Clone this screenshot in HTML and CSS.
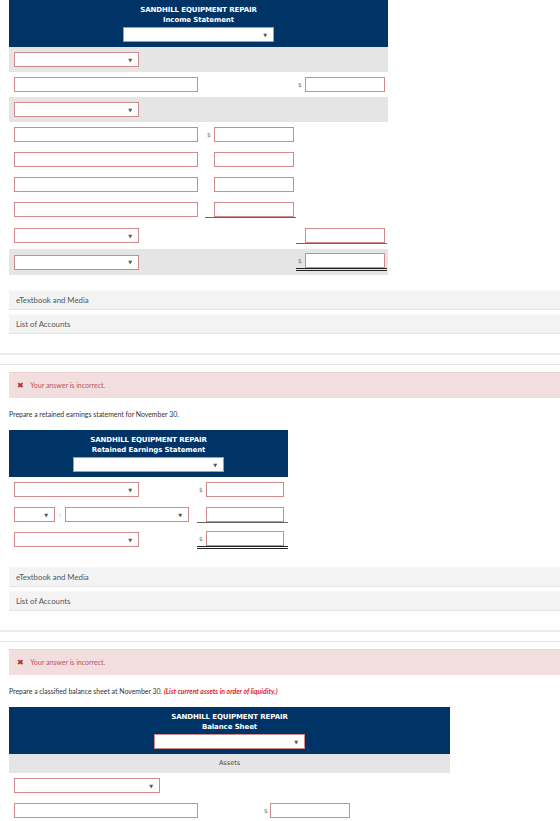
FILE: index.html
```html
<!DOCTYPE html>
<html lang="en">
<head>
  <meta charset="UTF-8" />
  <title>Sandhill Equipment Repair ‒ Financial Statements</title>
  <link rel="stylesheet" href="styles.css">
</head>

<body>
  <!-- INCOME STATEMENT -->
  <section class="sheet sheet-income">
    <header class="sheet-head">
      <div class="sheet-title">SANDHILL EQUIPMENT REPAIR</div>
      <div class="sheet-title">Income Statement</div>
      <div class="select select-date"><span class="caret">&#9660;</span></div>
    </header>

    <div class="line shade">
      <div class="select select-label"><span class="caret">&#9660;</span></div>
    </div>
    <div class="line">
      <div class="field field-label"></div>
      <div></div>
      <div class="amt"><span class="cur">$</span><div class="field field-amt"></div></div>
    </div>
    <div class="line shade">
      <div class="select select-label"><span class="caret">&#9660;</span></div>
    </div>
    <div class="line">
      <div class="field field-label"></div>
      <div class="amt"><span class="cur">$</span><div class="field field-amt"></div></div>
    </div>
    <div class="line">
      <div class="field field-label"></div>
      <div class="amt"><span class="cur"></span><div class="field field-amt"></div></div>
    </div>
    <div class="line">
      <div class="field field-label"></div>
      <div class="amt"><span class="cur"></span><div class="field field-amt"></div></div>
    </div>
    <div class="line">
      <div class="field field-label"></div>
      <div class="amt sum"><span class="cur"></span><div class="field field-amt"></div></div>
    </div>
    <div class="line line-tall">
      <div class="select select-label"><span class="caret">&#9660;</span></div>
      <div></div>
      <div class="amt sum"><span class="cur"></span><div class="field field-amt"></div></div>
    </div>
    <div class="line line-last shade">
      <div class="select select-label"><span class="caret">&#9660;</span></div>
      <div></div>
      <div class="amt total"><span class="cur">$</span><div class="field field-amt"></div></div>
    </div>
  </section>

  <div class="resources">
    <div class="res-item">eTextbook and Media</div>
    <div class="res-item">List of Accounts</div>
  </div>

  <div class="divide"></div>

  <!-- RETAINED EARNINGS -->
  <div class="feedback"><span class="feedback-x">&#10006;</span> Your answer is incorrect.</div>
  <p class="prompt">Prepare a retained earnings statement for November 30.</p>

  <section class="sheet sheet-re">
    <header class="sheet-head">
      <div class="sheet-title">SANDHILL EQUIPMENT REPAIR</div>
      <div class="sheet-title">Retained Earnings Statement</div>
      <div class="select select-date"><span class="caret">&#9660;</span></div>
    </header>

    <div class="line">
      <div class="select select-label"><span class="caret">&#9660;</span></div>
      <div class="amt"><span class="cur">$</span><div class="field field-amt"></div></div>
    </div>
    <div class="line">
      <div class="pair">
        <div class="select select-op"><span class="caret">&#9660;</span></div>
        <span class="colon">:</span>
        <div class="select select-acct"><span class="caret">&#9660;</span></div>
      </div>
      <div class="amt sum"><span class="cur"></span><div class="field field-amt"></div></div>
    </div>
    <div class="line">
      <div class="select select-label"><span class="caret">&#9660;</span></div>
      <div class="amt total"><span class="cur">$</span><div class="field field-amt"></div></div>
    </div>
  </section>

  <div class="resources resources-re">
    <div class="res-item">eTextbook and Media</div>
    <div class="res-item">List of Accounts</div>
  </div>

  <div class="divide"></div>

  <!-- BALANCE SHEET -->
  <div class="feedback"><span class="feedback-x">&#10006;</span> Your answer is incorrect.</div>
  <p class="prompt">Prepare a classified balance sheet at November 30. <em class="hint">(List current assets in order of liquidity.)</em></p>

  <section class="sheet sheet-bs">
    <header class="sheet-head">
      <div class="sheet-title">SANDHILL EQUIPMENT REPAIR</div>
      <div class="sheet-title">Balance Sheet</div>
      <div class="select select-date"><span class="caret">&#9660;</span></div>
    </header>

    <div class="band">Assets</div>

    <div class="line">
      <div class="select select-wide"><span class="caret">&#9660;</span></div>
    </div>
    <div class="line">
      <div class="field field-label"></div>
      <div class="amt"><span class="cur">$</span><div class="field field-amt"></div></div>
    </div>
  </section>
</body>
</html>
```

FILE: styles.css
```css
/* Reset */
* {
  margin: 0;
  padding: 0;
  box-sizing: border-box;
}

body {
  background: #fff;
  color: #333;
  font-family: Lato, 'Open Sans', sans-serif;
  font-size: 7px;
  overflow: hidden;
}

/* 1) STATEMENT TABLES */
.sheet {
  margin-left: 9px;
}

.sheet-income { width: 379px; }
.sheet-re     { width: 279px; }
.sheet-bs     { width: 441px; }

.sheet-head {
  background: #003366;
  color: #fff;
  text-align: center;
  padding: 5px 0 5px;
  display: flex;
  flex-direction: column;
  align-items: center;
}

.sheet-title {
  font-family: 'DejaVu Sans', Verdana, sans-serif;
  font-weight: bold;
  font-size: 7px;
  line-height: 10px;
  letter-spacing: -0.1px;
}

.sheet-head .select {
  margin-top: 2px;
}

/* rows: label column, then one or two amount columns */
.line {
  display: grid;
  align-items: center;
  height: 25px;
  padding-left: 5px;
}

.sheet-income .line { grid-template-columns: 191px 91px 91px; }
.sheet-re .line     { grid-template-columns: 183px 91px; }
.sheet-bs .line     { grid-template-columns: 248px 90px; }

.line-tall { height: 27px; }
.line-last { height: 26px; }

.shade {
  background: #e5e5e5;
}

.band {
  background: #e5e5e5;
  height: 19px;
  line-height: 19px;
  text-align: center;
  font-family: 'DejaVu Sans', Verdana, sans-serif;
  font-size: 6.5px;
  color: #444;
}

/* 2) INPUTS AND DROPDOWNS */
.field,
.select {
  height: 15px;
  background: #fff;
  border: 1px solid #cf8b8b;
}

.field-label { width: 184px; }
.field-amt   { width: 80px; }
.sheet-re .field-amt { width: 78px; }
.sheet-re .amt { padding-right: 4px; }

.select {
  display: flex;
  align-items: center;
  justify-content: flex-end;
  padding-right: 6px;
}

.select-date  { width: 151px; }
.select-label { width: 125px; }
.select-wide  { width: 146px; }
.select-op    { width: 41px; }
.select-acct  { width: 124px; }

.caret {
  font-family: 'DejaVu Sans', sans-serif;
  font-size: 5px;
  color: #555;
}

.pair {
  display: flex;
  align-items: center;
}

.colon {
  width: 10px;
  text-align: center;
  color: #777;
  font-size: 6px;
}

.amt {
  display: flex;
  justify-content: space-between;
  align-items: center;
  padding: 0 2px;
}

.cur {
  font-family: 'DejaVu Sans', sans-serif;
  font-size: 6px;
  color: #777;
}

.amt.sum   { border-bottom: 1px solid #666; }
.amt.total { border-bottom: 3px double #222; }

/* 3) RESOURCE LINKS */
.resources {
  margin: 15px 0 0 9px;
}

.resources-re {
  margin-top: 15px;
}

.res-item {
  background: #f3f3f3;
  border-top: 1px solid #f7f7f7;
  border-bottom: 1px solid #e3e3e3;
  height: 20px;
  line-height: 19px;
  padding-left: 7px;
  font-size: 7.8px;
  color: #555;
  margin-bottom: 4px;
}

.divide {
  margin-top: 19px;
  border-top: 2px solid #ececec;
  border-bottom: 1px solid #e5e5e5;
  height: 12px;
}

/* 4) FEEDBACK + PROMPTS */
.feedback {
  margin: 7px 0 0 9px;
  background: #f2dede;
  border-top: 1px solid #ecd2d2;
  height: 26px;
  line-height: 25px;
  padding-left: 8px;
  color: #b5585a;
  font-size: 7px;
}

.feedback-x {
  color: #a33;
  font-family: 'DejaVu Sans', sans-serif;
  font-size: 8px;
  margin-right: 5px;
}

.prompt {
  margin: 12px 0 11px 9px;
  font-size: 6.9px;
  line-height: 9px;
  color: #333;
}

.hint {
  color: #e31c1c;
  font-weight: bold;
}
```
